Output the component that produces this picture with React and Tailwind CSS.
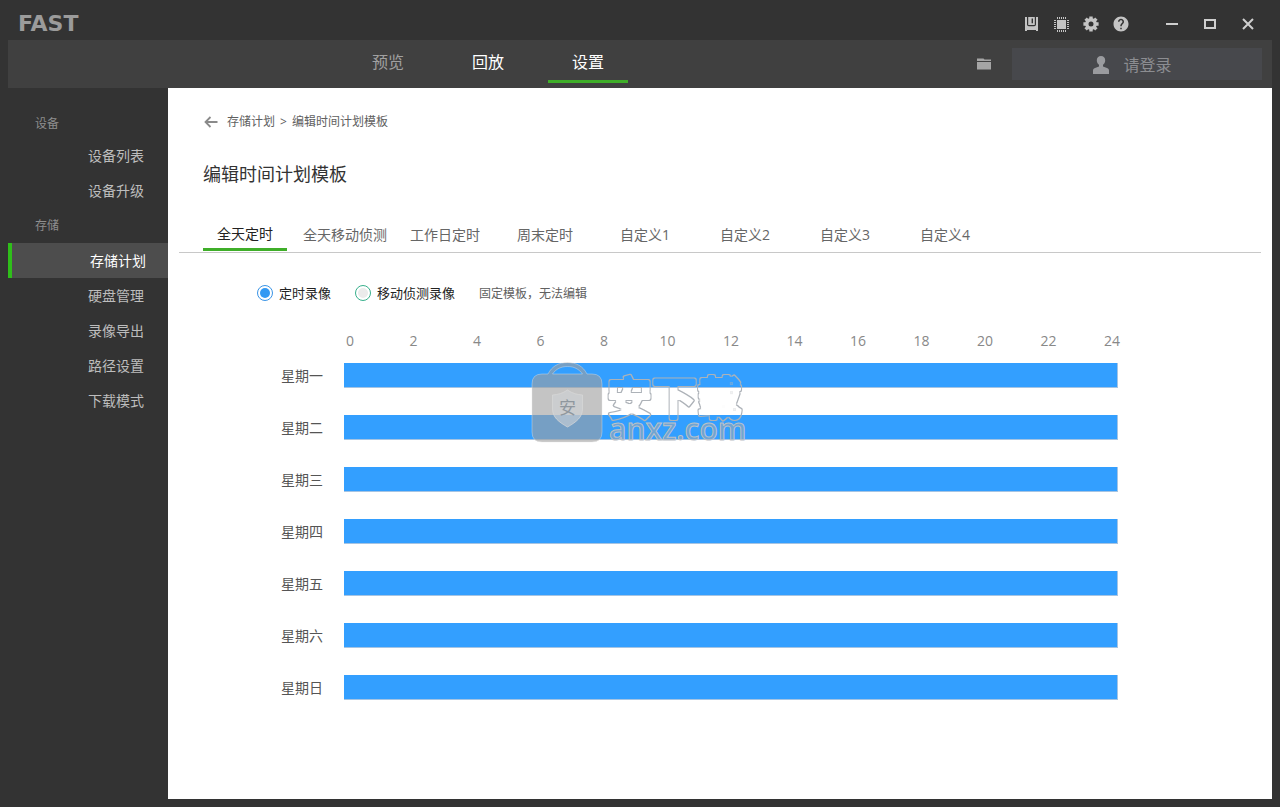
import { useState } from "react";
import { MdHelp } from "react-icons/md";

const NAV = ["预览", "回放", "设置"];
const TEMPLATES = ["全天定时", "全天移动侦测", "工作日定时", "周末定时", "自定义1", "自定义2", "自定义3", "自定义4"];
const HOURS = [0, 2, 4, 6, 8, 10, 12, 14, 16, 18, 20, 22, 24];
const DAYS = ["星期一", "星期二", "星期三", "星期四", "星期五", "星期六", "星期日"];
const DEVICE_ITEMS = ["设备列表", "设备升级"];
const STORAGE_ITEMS = ["存储计划", "硬盘管理", "录像导出", "路径设置", "下载模式"];

function SaveIcon() {
  return (
    <svg width="13" height="14" viewBox="0 0 13 14" aria-hidden="true">
      <path fill="#c4c4c4" d="M0 0h13v14h-2v-1H2v1H0z" />
      <path fill="none" stroke="#333333" strokeWidth="1.2" d="M2.6 0v7.4q0 1.2 1.2 1.2h5.4q1.2 0 1.2-1.2V0" />
      <path fill="#333333" d="M6.6 1.6h1.4v4.6h-1.4z" />
    </svg>
  );
}

function ChipIcon() {
  const pins = [3.5, 5.5, 7.5, 9.5, 11.5];
  return (
    <svg width="15" height="15" viewBox="0 0 15 15" fill="#c4c4c4" aria-hidden="true">
      <rect x="3" y="3" width="9" height="9" />
      {pins.map((p) => (
        <path key={p} stroke="#c4c4c4" d={`M${p} 0v2M${p} 13v2M0 ${p}h2M13 ${p}h2`} />
      ))}
    </svg>
  );
}

function GearIcon() {
  return (
    <svg width="16" height="16" viewBox="-8 -8 16 16" aria-hidden="true">
      <circle r="4.2" fill="none" stroke="#c4c4c4" strokeWidth="3.4" />
      {[0, 45, 90, 135].map((a) => (
        <path key={a} transform={`rotate(${a})`} fill="#c4c4c4" d="M-1.7-7.6h3.4v2.8h-3.4zM-1.7 4.8h3.4v2.8h-3.4z" />
      ))}
    </svg>
  );
}

function TitleBar() {
  return (
    <header className="flex h-10 items-center justify-between pt-2 pr-[13px] pl-[18px]">
      <div className="font-['DejaVu_Sans'] text-[22px] leading-8 font-bold text-[#9b9b9b]">FAST</div>
      <div className="flex items-center gap-[17px]">
        <div className="flex">
          <button aria-label="存储" className="flex h-8 w-[30px] items-center justify-center"><SaveIcon /></button>
          <button aria-label="处理器" className="flex h-8 w-[30px] items-center justify-center"><ChipIcon /></button>
          <button aria-label="系统设置" className="flex h-8 w-[30px] items-center justify-center"><GearIcon /></button>
          <button aria-label="帮助" className="flex h-8 w-[30px] items-center justify-center text-[#c4c4c4]"><MdHelp size={18} /></button>
        </div>
        <div className="flex">
          <button aria-label="最小化" className="flex h-8 w-[38px] items-center justify-center">
            <svg width="12" height="12" aria-hidden="true"><path d="M0 6h12" stroke="#cfcfcf" strokeWidth="2" /></svg>
          </button>
          <button aria-label="最大化" className="flex h-8 w-[38px] items-center justify-center">
            <svg width="12" height="10" aria-hidden="true"><rect x="1" y="1" width="10" height="8" fill="none" stroke="#cfcfcf" strokeWidth="2" /></svg>
          </button>
          <button aria-label="关闭" className="flex h-8 w-[38px] items-center justify-center">
            <svg width="12" height="12" aria-hidden="true"><path d="M1 1l10 10M11 1L1 11" stroke="#cfcfcf" strokeWidth="2" /></svg>
          </button>
        </div>
      </div>
    </header>
  );
}

function NavBar() {
  return (
    <div className="mx-2 flex h-12 justify-between bg-[#404040]">
      <nav className="ml-[330px] flex">
        {NAV.map((item, i) => (
          <a key={item} href="#" className="flex w-[100px] justify-center">
            <span
              className={
                i === 2
                  ? "mb-[5px] flex w-20 items-center justify-center border-b-[3px] border-[#3fae29] pt-1 text-base text-white"
                  : i === 1
                    ? "mb-2 flex w-20 items-center justify-center pt-1 text-base text-white"
                    : "mb-2 flex w-20 items-center justify-center pt-1 text-base text-[#a0a0a0]"
              }
            >
              {item}
            </span>
          </a>
        ))}
      </nav>
      <div className="mr-[10px] flex items-center gap-5">
        <button aria-label="打开文件夹" className="flex h-8 w-4 items-center justify-center">
          <svg width="14" height="12" viewBox="0 0 14 12" fill="#a5a5a5" aria-hidden="true">
            <path d="M0 .5h6.5l1 1H14V3H0zM0 4h14v7.5H0z" />
          </svg>
        </button>
        <button className="flex h-8 w-[250px] items-center justify-center gap-[14px] bg-[#47484c] pt-0.5 pr-[9px] text-base text-[#8c8d91]">
          <svg width="16" height="18" viewBox="0 0 16 18" fill="#9a9b9f" aria-hidden="true">
            <path d="M8 0c2.6 0 4.2 1.7 4.2 4.2 0 2-.9 3.6-2.2 4.5v1.8l4 1.400c1.4.5 2 1.3 2 2.7V18H0v-3.4c0-1.4.6-2.2 2-2.7l4-1.4V8.700C4.7 7.8 3.8 6.2 3.8 4.2 3.8 1.7 5.4 0 8 0z" />
          </svg>
          请登录
        </button>
      </div>
    </div>
  );
}

function SideLink({ label, active }) {
  return (
    <a
      href="#"
      className={
        active
          ? "flex h-[35px] items-center border-l-4 border-[#2fbe1a] bg-[#4d4d4d] pl-[78px] text-sm text-white"
          : "flex h-[35px] items-center pl-20 text-sm text-[#bdbdbd]"
      }
    >
      {label}
    </a>
  );
}

function Sidebar() {
  return (
    <aside className="ml-2 w-40 shrink-0 pt-[22px]">
      <h2 className="flex h-7 items-center pl-[27px] text-xs text-[#8e8e8e]">设备</h2>
      {DEVICE_ITEMS.map((l) => <SideLink key={l} label={l} />)}
      <h2 className="flex h-[35px] items-center pl-[27px] text-xs text-[#8e8e8e]">存储</h2>
      {STORAGE_ITEMS.map((l, i) => <SideLink key={l} label={l} active={i === 0} />)}
    </aside>
  );
}

function Watermark() {
  return (
    <svg
      className="pointer-events-none absolute top-[273px] left-[362px] overflow-visible"
      width="220"
      height="86"
      viewBox="0 0 220 86"
      role="img"
      aria-label="anxz.com"
    >
      <filter id="hollow" filterUnits="userSpaceOnUse" x="68" y="0" width="156" height="76">
        <feMorphology in="SourceGraphic" operator="erode" radius="1" result="inner" />
        <feComposite in="SourceGraphic" in2="inner" operator="out" />
      </filter>
      <path
        fillRule="evenodd"
        fill="#a0a0a0"
        fillOpacity=".62"
        stroke="#e6e6e6"
        strokeOpacity=".4"
        d="M12 13h6C22 5 29 1.5 37.5 1.5S53 5 57 13h5q10 0 10 10v48q0 10-10 10H12Q2 81 2 71V23q0-10 10-10zM22.5 13h30C49 8 44 5.5 37.5 5.5S26 8 22.5 13z"
      />
      <path d="M37.5 29c5 3.5 9.5 4.5 15 5v14c0 8-6 13-15 18-9-5-15-10-15-18V34c5.5-.5 10-1.5 15-5z" fill="#d0d3d7" fillOpacity=".6" stroke="#d9d9d9" strokeOpacity=".7" />
      <text x="37.5" y="53" textAnchor="middle" fontFamily="'Noto Sans CJK SC', sans-serif" fontSize="17" fill="#8f979e">安</text>
      <text
        x="77"
        y="54"
        fontFamily="'Noto Sans CJK SC', sans-serif"
        fontSize="45"
        fontWeight="700"
        fill="#adb2b8"
        stroke="#adb2b8"
        strokeWidth="4"
        strokeLinejoin="round"
        filter="url(#hollow)"
      >
        安下载
      </text>
      <text x="79" y="79" fontFamily="'Open Sans', sans-serif" fontSize="30" fontWeight="600" fill="#9aa8b6" fillOpacity=".6" stroke="#bcc2c8" strokeWidth="1">anxz.com</text>
    </svg>
  );
}

export default function App() {
  const [tab, setTab] = useState(0);
  const [mode, setMode] = useState("timed");
  return (
    <div className="flex min-h-screen flex-col bg-[#333333] pb-2 font-['Open_Sans','Noto_Sans_CJK_SC',sans-serif]">
      <TitleBar />
      <NavBar />
      <div className="flex flex-1">
        <Sidebar />
        <main className="relative mr-2 min-w-0 flex-1 bg-white px-[11px] pt-6">
          <div className="flex h-5 items-center pl-[25px] text-xs text-[#606060]">
            <a href="#" aria-label="返回" className="mr-[9px]">
              <svg width="14" height="12" viewBox="0 0 14 12" fill="none" stroke="#8a8a8a" strokeWidth="1.8" aria-hidden="true">
                <path d="M6.5 1L1.5 6l5 5M1.5 6H13.5" />
              </svg>
            </a>
            <a href="#">存储计划</a>
            <span className="mx-[5px]">&gt;</span>
            <span>编辑时间计划模板</span>
          </div>
          <h1 className="mt-7 pl-6 text-lg leading-7 text-[#333333]">编辑时间计划模板</h1>
          <div role="tablist" className="mt-5 flex h-[45px] border-b border-[#c8c8c8] pl-4">
            {TEMPLATES.map((t, i) => (
              <button
                key={t}
                role="tab"
                aria-selected={tab === i}
                onClick={() => setTab(i)}
                className="flex w-[100px] justify-center text-sm"
              >
                <span
                  className={
                    tab === i
                      ? "flex h-[43px] w-[84px] items-center justify-center border-b-[3px] border-[#3fae29] pt-3 whitespace-nowrap text-[#222222]"
                      : "flex h-[43px] w-[84px] items-center justify-center pt-2.5 whitespace-nowrap text-[#666666]"
                  }
                >
                  {t}
                </span>
              </button>
            ))}
          </div>
          <div className="mt-[30px] flex h-5 items-center pl-[78px] text-[13px] text-[#222222]">
            <label className="flex items-center gap-1.5">
              <input
                type="radio"
                name="mode"
                checked={mode === "timed"}
                onChange={() => setMode("timed")}
                className="size-4 appearance-none rounded-full border border-[#38b08c] bg-[#ebebeb] bg-clip-content p-0.5 checked:border-[#3a94e6] checked:bg-[#3399f3]"
              />
              <span className="pt-0.5">定时录像</span>
            </label>
            <label className="ml-6 flex items-center gap-1.5">
              <input
                type="radio"
                name="mode"
                checked={mode === "motion"}
                onChange={() => setMode("motion")}
                className="size-4 appearance-none rounded-full border border-[#38b08c] bg-[#ebebeb] bg-clip-content p-0.5 checked:border-[#3a94e6] checked:bg-[#3399f3]"
              />
              <span className="pt-0.5">移动侦测录像</span>
            </label>
            <span className="ml-6 pt-0.5 text-xs text-[#606060]">固定模板，无法编辑</span>
          </div>
          <section className="mt-7 mr-[143px] ml-[102px]">
            <div className="ml-[63px] flex h-5 justify-between text-sm text-[#888888]">
              {HOURS.map((h) => (
                <span key={h} className="flex w-3 items-center justify-center">{h}</span>
              ))}
            </div>
            <div className="mt-3 flex flex-col gap-[27px]">
              {DAYS.map((d) => (
                <div key={d} className="flex h-[25px] items-center">
                  <span className="w-[63px] shrink-0 text-sm text-[#555555]">{d}</span>
                  <div className="h-full flex-1 border-r border-b border-[#a5c4e3] bg-[#339fff]" />
                </div>
              ))}
            </div>
          </section>
          <Watermark />
        </main>
      </div>
    </div>
  );
}
